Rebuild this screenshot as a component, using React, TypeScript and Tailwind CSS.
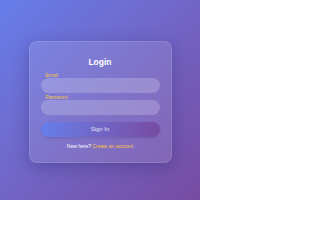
export default function App() {
  return (
    <div className="w-[200px] h-[200px] bg-gradient-to-br from-[#667eea] to-[#764ba2] flex items-start justify-center pt-[41px] overflow-hidden" style={{ fontFamily: '"Liberation Sans", Arial, sans-serif' }}>
      <div className="w-[143px] h-[122px] rounded-[8px] bg-white/10 border border-white/[0.12] shadow-[0_4px_16px_rgba(31,38,100,0.35)] px-[11px] pt-[14px] flex flex-col">
        <div className="text-center text-white font-bold text-[8.5px] leading-[12px]">Login</div>
        <div className="mt-[4px] pl-[5px] text-[5px] leading-[6px] text-[#f5c542]">Email</div>
        <div className="h-[15px] rounded-full bg-white/20"></div>
        <div className="mt-[1px] pl-[5px] text-[5px] leading-[6px] text-[#f5c542]">Password</div>
        <div className="h-[15px] rounded-full bg-white/20"></div>
        <div className="mt-[7px] h-[15px] rounded-full bg-gradient-to-r from-[#667eea] to-[#764ba2] flex items-center justify-center text-white/80 text-[6px] shadow-sm">Sign In</div>
        <div className="mt-[6px] text-center text-[5px] leading-[6px] text-white">New here? <span className="text-[#f5c542]">Create an account</span></div>
      </div>
    </div>
  );
}
